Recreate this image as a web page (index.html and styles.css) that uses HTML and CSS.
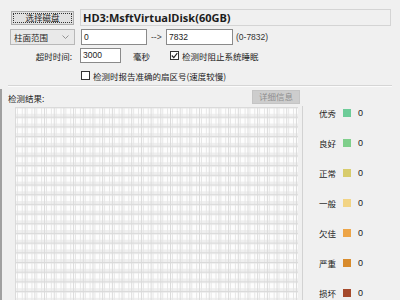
FILE: index.html
```html
<!DOCTYPE html>
<html>
<head>
<meta charset="utf-8">
<link rel="stylesheet" href="styles.css">
</head>
<body>
<div class="win">
  <div class="row r1">
    <button class="btn focus">选择磁盘</button>
    <div class="diskname">HD3:MsftVirtualDisk(60GB)</div>
  </div>
  <div class="row r2">
    <div class="combo"><span>柱面范围</span><svg width="7" height="4" viewBox="0 0 7 4"><path d="M0.5 0.5 L3.5 3.5 L6.5 0.5" fill="none" stroke="#888" stroke-width="0.9"/></svg></div>
    <div class="input from">0</div>
    <span class="arrow">--&gt;</span>
    <div class="input to">7832</div>
    <span class="range">(0-7832)</span>
  </div>
  <div class="row r3">
    <span class="lbl">超时时间:</span>
    <div class="input tmo">3000</div>
    <span class="unit">毫秒</span>
    <span class="chk checked"><svg width="7" height="7" viewBox="0 0 7 7"><path d="M0.8 3.5 L2.8 5.6 L6.3 1.2" fill="none" stroke="#222" stroke-width="1.1"/></svg></span>
    <span class="chklbl">检测时阻止系统睡眠</span>
  </div>
  <div class="row r4">
    <span class="chk"></span>
    <span class="chklbl">检测时报告准确的扇区号(速度较慢)</span>
  </div>
  <div class="sep"></div>
  <div class="lower">
    <div class="row r5">
      <span class="res">检测结果:</span>
      <button class="btn disabled">详细信息</button>
    </div>
    <div class="main">
      <div class="grid"></div>
      <div class="legend">
        <div class="item"><span class="name">优秀</span><span class="sw c1"></span><span class="cnt">0</span></div>
        <div class="item"><span class="name">良好</span><span class="sw c2"></span><span class="cnt">0</span></div>
        <div class="item"><span class="name">正常</span><span class="sw c3"></span><span class="cnt">0</span></div>
        <div class="item"><span class="name">一般</span><span class="sw c4"></span><span class="cnt">0</span></div>
        <div class="item"><span class="name">欠佳</span><span class="sw c5"></span><span class="cnt">0</span></div>
        <div class="item"><span class="name">严重</span><span class="sw c6"></span><span class="cnt">0</span></div>
        <div class="item"><span class="name">损坏</span><span class="sw c7"></span><span class="cnt">0</span></div>
      </div>
    </div>
  </div>
</div>
</body>
</html>
```
FILE: styles.css
```css
html, body { margin: 0; padding: 0; }
body {
  background: #f0f0f0;
  font-family: "Noto Sans CJK SC", "Liberation Sans", sans-serif;
  font-size: 8.5px;
  color: #1c1c1c;
  width: 400px;
  height: 300px;
  overflow: hidden;
}
.win { padding-top: 9px; }
.row { display: flex; align-items: center; white-space: nowrap; }
.btn {
  font-family: inherit;
  font-size: 8.5px;
  background: #e1e1e1;
  border: 1px solid #adadad;
  padding: 0;
  color: #1c1c1c;
  line-height: 1;
  box-sizing: border-box;
}
.r1 { height: 17px; }
.btn.focus {
  margin-left: 11px;
  width: 63px;
  height: 14px;
  outline: 1px dotted #333;
  outline-offset: -3px;
}
.diskname {
  margin-left: 6px;
  width: 311px;
  height: 17px;
  box-sizing: border-box;
  border: 1px solid #d4d4d4;
  background: #f0f0f0;
  font-family: "Open Sans", "DejaVu Sans", sans-serif;
  font-weight: 700;
  font-size: 11px;
  line-height: 15px;
  padding-left: 2px;
  color: #1c1c1c;
}
.r2 { margin-top: 3px; height: 16px; }
.combo {
  margin-left: 10px;
  width: 65px;
  height: 16px;
  box-sizing: border-box;
  border: 1px solid #b8b8b8;
  background: #e9e9e9;
  display: flex;
  align-items: center;
  justify-content: space-between;
  padding: 0 5px 0 3px;
}
.input {
  height: 16px;
  box-sizing: border-box;
  border: 1px solid #8a8a8a;
  background: #fff;
  font-family: "Liberation Sans", sans-serif;
  font-size: 8.5px;
  line-height: 14px;
  padding-left: 2px;
}
.from { margin-left: 6px; width: 66px; }
.to { width: 67px; }
.arrow { font-family: "Liberation Sans", sans-serif; margin: 0 2px 0 4px; width: 13px; font-size: 8.5px; color:#444; }
.range { font-family: "Liberation Sans", sans-serif; margin-left: 3px; font-size: 8.5px; color:#333; }
.r3 { margin-top: 3px; height: 15px; }
.lbl { width: 72px; text-align: right; }
.tmo { margin-left: 8px; width: 41px; height: 15px; line-height: 13px; }
.unit { margin-left: 12px; }
.chk {
  width: 9px; height: 9px;
  border: 1px solid #333;
  background: #fff;
  box-sizing: border-box;
  display: inline-flex; align-items: center; justify-content: center;
}
.r3 .chk { margin-left: 20px; }
.chklbl { margin-left: 3px; }
.r4 { margin-top: 7px; height: 11px; }
.r4 .chk { margin-left: 81px; }
.sep {
  margin: 4px 8px 0 8px;
  height: 1px;
  background: #d5d5d5;
  border-bottom: 1px solid #fbfbfb;
}
.lower {
  border-left: 2px solid #a0a0a0;
}
.r5 { margin-top: 2px; height: 15px; }
.res { margin-left: 6px; width: 244px; padding-top: 3px; }
.btn.disabled {
  width: 48px; height: 14px;
  background: #cdcdcd;
  border-color: #c4c4c4;
  color: #8e8e8e;
}
.main { display: flex; margin-top: 3px; }
.grid {
  margin-left: 13px;
  width: 283px;
  height: 193px;
  background-color: #efefef;
  background-image:
    linear-gradient(90deg, #dadada 1px, transparent 1px),
    linear-gradient(#dadada 1px, transparent 1px),
    linear-gradient(90deg, transparent 2px, #e6e6e6 2px, #e6e6e6 3px, transparent 3px, transparent 7px, #e6e6e6 7px, #e6e6e6 8px, transparent 8px),
    linear-gradient(transparent 2px, #fdfdfd 2px, #fdfdfd 7px, transparent 7px);
  background-size: 9.7px 9.7px;
}
.legend {
  margin-left: 4px;
  border-left: 1px solid #d2d2d2;
  flex: 1;
  display: flex;
  flex-direction: column;
  gap: 16px;
  margin-top: -1px;
}
.item { display: flex; align-items: center; height: 14px; }
.name { margin-left: 16px; width: 17px; }
.sw { width: 8px; height: 8px; margin-left: 7px; }
.cnt { margin-left: 7px; font-family: "Liberation Sans", sans-serif; font-size: 9px; }
.c1 { background: #6dcc98; }
.c2 { background: #7fcf8b; }
.c3 { background: #d8cc6c; }
.c4 { background: #f2d485; }
.c5 { background: #eda548; }
.c6 { background: #d88b2c; }
.c7 { background: #a54a2c; }
```
